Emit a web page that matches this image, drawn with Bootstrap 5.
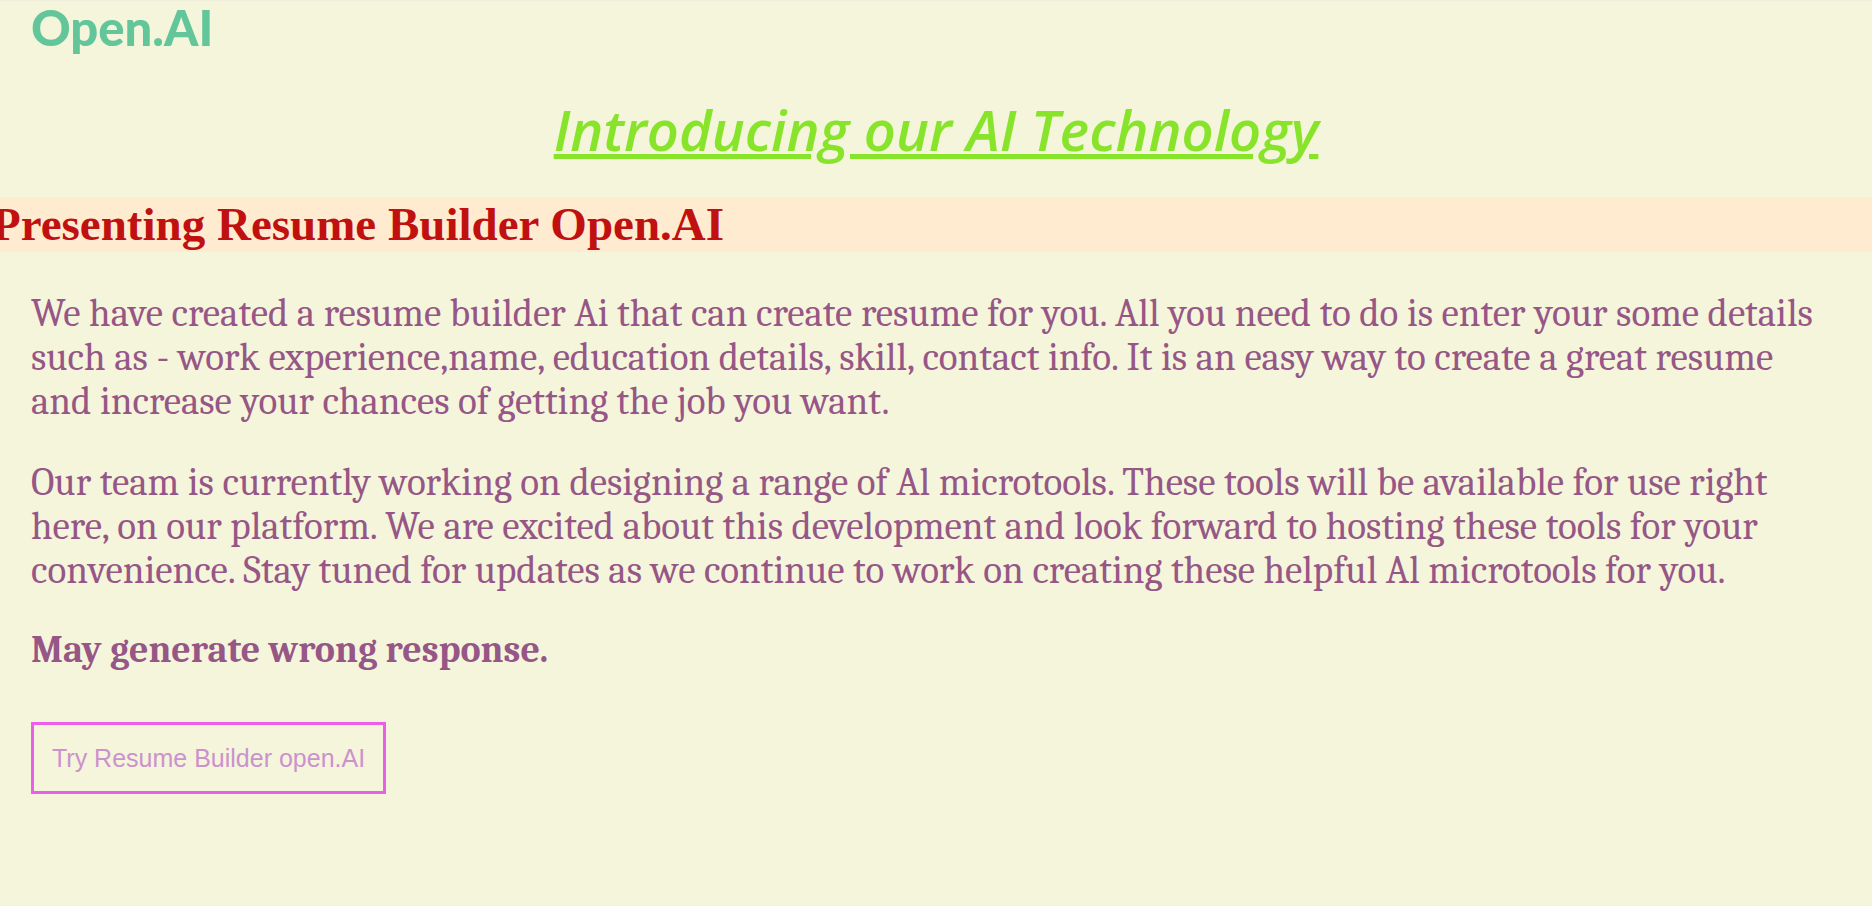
<!DOCTYPE html>
<html lang="en">
<head>
<meta charset="utf-8">
<meta name="viewport" content="width=device-width, initial-scale=1">
<title>Open.AI</title>
<link href="https://cdn.jsdelivr.net/npm/bootstrap@5.3.0/dist/css/bootstrap.min.css" rel="stylesheet">
<style>
  body { background: #f5f5dc; color: #965786; border-top: 1px solid #efeedb; overflow-x: hidden; }
  .page-gutter { padding: 0 40px 0 31px; }
  .brand-name { font: 900 49px/52px Lato, sans-serif; color: #62c69a; }
  .intro-title { font: italic 600 56px/76px "Open Sans", sans-serif; color: #88e42b; text-decoration-thickness: 5px; text-underline-offset: 3px; margin: 38px 0 30px; }
  .band { background: #ffebcf; }
  .band-title { font: bold 47px/55px "Liberation Serif", serif; color: #c01010; margin: 0 0 40px -8px; }
  .copy { font: 39px/44px Caladea, Cambria, "Liberation Serif", serif; }
  .copy p { margin-bottom: 37px; }
  .copy .notice { font-size: 38px; line-height: 40px; margin-bottom: 52px; }
  .try-btn { font: 25px/30px "Liberation Sans", sans-serif; color: #cc92cc; background: transparent; border: 3px solid #ea5ee8; padding: 18px; }
</style>
</head>
<body>
<header class="page-gutter"><div class="brand-name">Open.AI</div></header>
<main>
  <h1 class="intro-title text-center text-decoration-underline">Introducing our AI Technology</h1>
  <div class="band"><h2 class="band-title">Presenting Resume Builder Open.AI</h2></div>
  <section class="page-gutter copy">
    <p>We have created a resume builder Ai that can create resume for you. All you need to do is enter your some details such as - work experience,name, education details, skill, contact info. It is an easy way to create a great resume and increase your chances of getting the job you want.</p>
    <p>Our team is currently working on designing a range of Al microtools. These tools will be available for use right here, on our platform. We are excited about this development and look forward to hosting these tools for your convenience. Stay tuned for updates as we continue to work on creating these helpful Al microtools for you.</p>
    <p class="notice fw-bold">May generate wrong response.</p>
    <button type="button" class="try-btn">Try Resume Builder open.AI</button>
  </section>
</main>
<script src="https://cdn.jsdelivr.net/npm/bootstrap@5.3.0/dist/js/bootstrap.bundle.min.js"></script>
</body>
</html>
